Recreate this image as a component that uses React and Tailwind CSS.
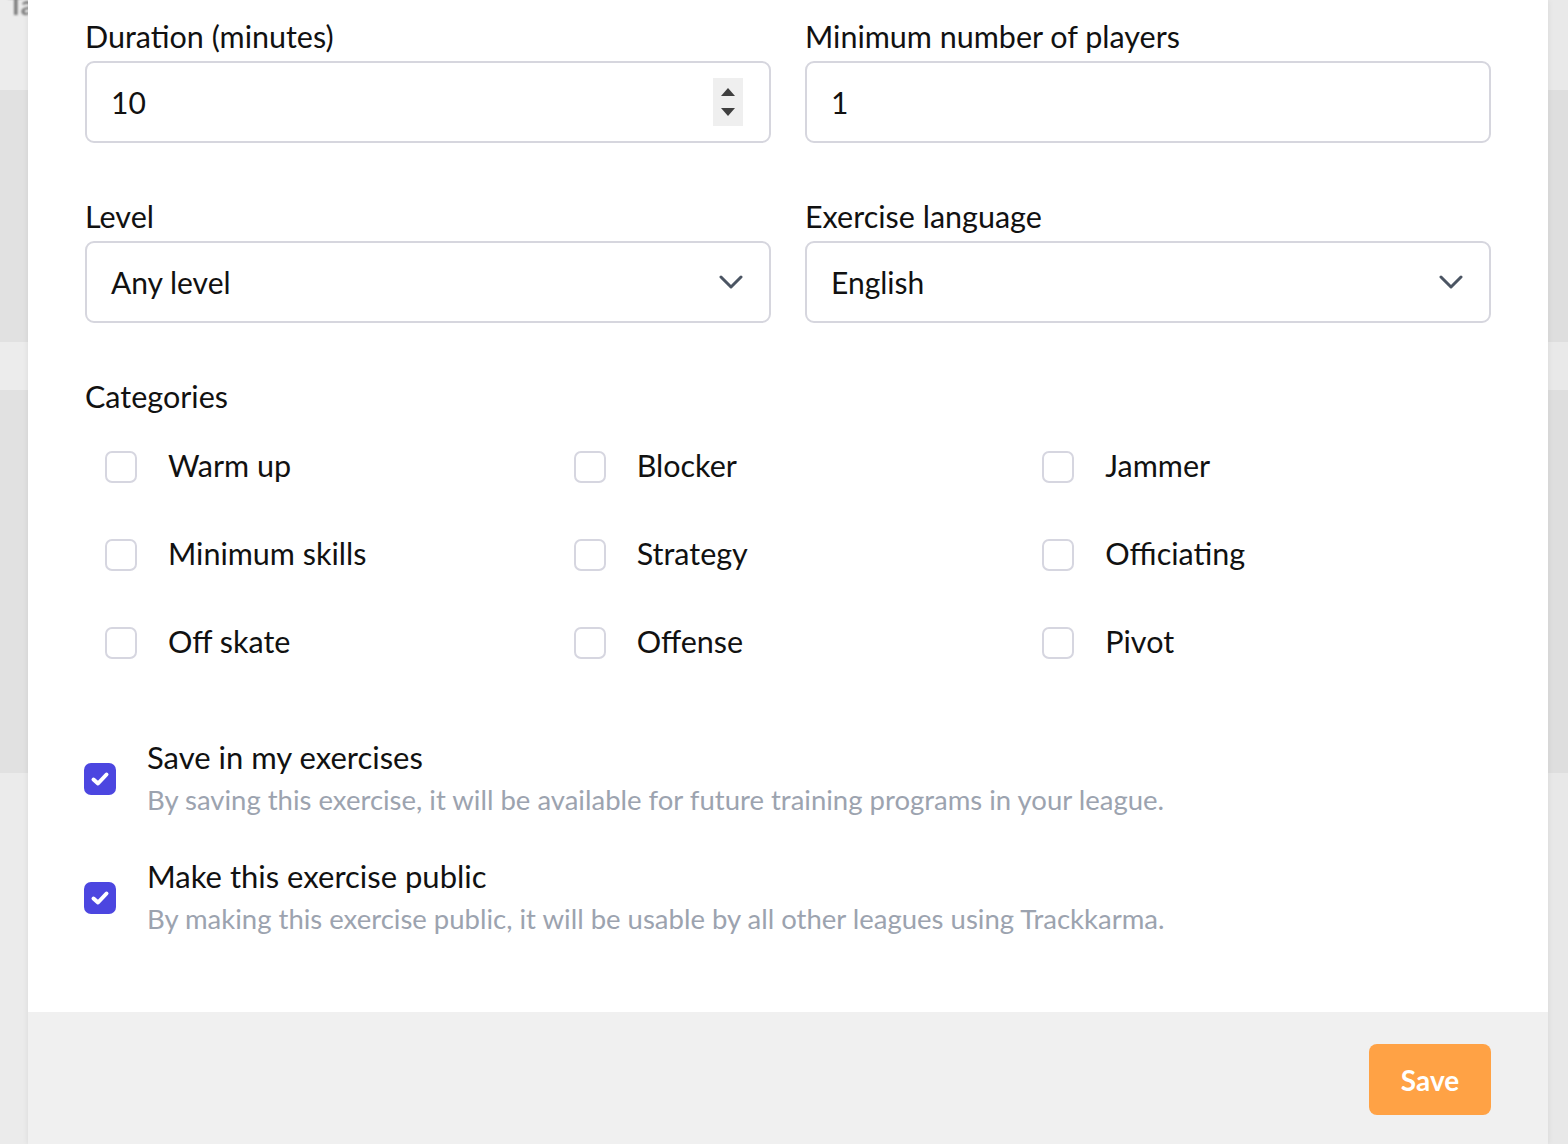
import React from 'react';

const font = { fontFamily: 'Lato, "Noto Sans", sans-serif' };

const categories = [
  'Warm up', 'Blocker', 'Jammer',
  'Minimum skills', 'Strategy', 'Officiating',
  'Off skate', 'Offense', 'Pivot',
];

function Chevron() {
  return (
    <svg width="24" height="14" viewBox="0 0 24 14" fill="none" className="shrink-0">
      <path d="M2 2l10 10L22 2" stroke="#4b5563" strokeWidth="3" strokeLinecap="round" strokeLinejoin="round" />
    </svg>
  );
}

function Spinner() {
  return (
    <div className="w-[30px] h-[48px] bg-[#efefef] flex flex-col items-center justify-center gap-[12px]">
      <svg width="14" height="8" viewBox="0 0 14 8"><path d="M0 8L7 0l7 8z" fill="#3f3f3f" /></svg>
      <svg width="14" height="8" viewBox="0 0 14 8"><path d="M0 0l7 8 7-8z" fill="#3f3f3f" /></svg>
    </div>
  );
}

function Field({ label, children }) {
  return (
    <div className="flex flex-col">
      <label className="text-[30.5px] leading-[36px] text-[#111] mb-[7px]">{label}</label>
      {children}
    </div>
  );
}

function Box({ children }) {
  return (
    <div className="h-[82px] border-2 border-[#d6d6de] rounded-[9px] bg-white flex items-center justify-between pl-[24px] pr-[26px] text-[30px] text-[#111]">
      {children}
    </div>
  );
}

function Checked() {
  return (
    <div className="w-[32px] h-[32px] rounded-[7px] bg-[#4c46e0] flex items-center justify-center shrink-0">
      <svg width="20" height="16" viewBox="0 0 20 16" fill="none">
        <path d="M3.5 8.5l4.5 4L16.5 3.5" stroke="white" strokeWidth="4" strokeLinecap="round" strokeLinejoin="round" />
      </svg>
    </div>
  );
}

export default function App() {
  return (
    <div className="h-[1144px] flex overflow-hidden bg-[#ebebeb]" style={font}>
      <div className="w-[28px] shrink-0 flex flex-col overflow-hidden">
        <div className="h-[90px] bg-[#ececec] overflow-hidden">
          <div className="-mt-[14px] pl-[8px] text-[26px] font-bold text-[#7a7a7a] blur-[1px]">Ta</div>
        </div>
        <div className="h-[252px] bg-[#e1e1e1]" />
        <div className="h-[48px] bg-[#ececec]" />
        <div className="h-[383px] bg-[#e1e1e1]" />
        <div className="flex-1 bg-[#ebebeb]" />
      </div>

      <div className="w-[1520px] shrink-0 bg-white flex flex-col shadow-[0_0_6px_rgba(0,0,0,0.08)] z-10">
        <div className="flex-1 px-[57px] pt-[18px]">
          <div className="grid grid-cols-2 gap-x-[34px] gap-y-[55px]">
            <Field label="Duration (minutes)">
              <Box>
                <span>10</span>
                <Spinner />
              </Box>
            </Field>
            <Field label="Minimum number of players">
              <Box>
                <span>1</span>
              </Box>
            </Field>
            <Field label="Level">
              <Box>
                <span>Any level</span>
                <Chevron />
              </Box>
            </Field>
            <Field label="Exercise language">
              <Box>
                <span>English</span>
                <Chevron />
              </Box>
            </Field>
          </div>

          <div className="mt-[55px] text-[30.5px] leading-[36px] text-[#111]">Categories</div>
          <div className="grid grid-cols-3 mt-[9px]">
            {categories.map(c => (
              <div key={c} className="h-[88px] flex items-center pl-[20px] gap-[31px]">
                <div className="w-[32px] h-[32px] border-2 border-[#d6d6e0] rounded-[7px] bg-white shrink-0" />
                <span className="text-[30.5px] text-[#111] -mt-[3px]">{c}</span>
              </div>
            ))}
          </div>

          <div className="mt-[52px] flex flex-col gap-[40px]">
            <div className="flex items-center gap-[31px] -ml-[1px]">
              <Checked />
              <div className="flex flex-col">
                <span className="text-[31px] leading-[36px] text-[#111]">Save in my exercises</span>
                <span className="text-[27.5px] leading-[36px] text-[#9ca3af] mt-[7px]">By saving this exercise, it will be available for future training programs in your league.</span>
              </div>
            </div>
            <div className="flex items-center gap-[31px] -ml-[1px]">
              <Checked />
              <div className="flex flex-col">
                <span className="text-[31px] leading-[36px] text-[#111]">Make this exercise public</span>
                <span className="text-[27.5px] leading-[36px] text-[#9ca3af] mt-[7px]">By making this exercise public, it will be usable by all other leagues using Trackkarma.</span>
              </div>
            </div>
          </div>
        </div>

        <div className="h-[132px] shrink-0 bg-[#f0f0f0] flex justify-end items-start pt-[32px] pr-[57px]">
          <button className="w-[122px] h-[71px] rounded-[8px] bg-[#ffa245] text-white text-[28px] font-bold">Save</button>
        </div>
      </div>

      <div className="flex-1 flex flex-col">
        <div className="h-[90px] bg-[#e9e9e9]" />
        <div className="h-[252px] bg-[#dedede]" />
        <div className="h-[48px] bg-[#e9e9e9]" />
        <div className="h-[383px] bg-[#dedede]" />
        <div className="flex-1 bg-[#e8e8e8]" />
      </div>
    </div>
  );
}
